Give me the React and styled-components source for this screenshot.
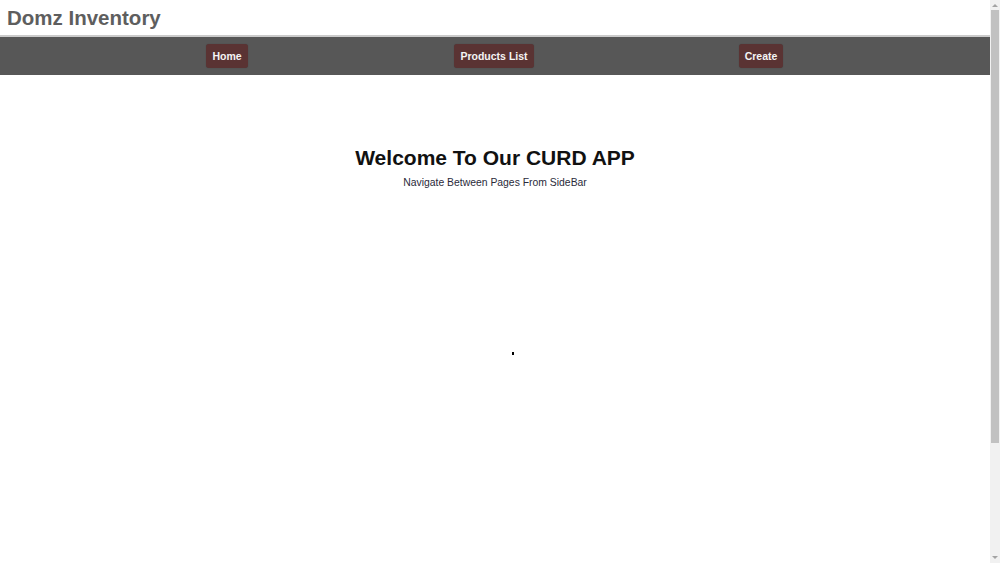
import styled, { createGlobalStyle } from 'styled-components';

const GlobalStyle = createGlobalStyle`
  html, body {
    margin: 0;
    padding: 0;
    background: #fff;
    font-family: "Liberation Sans", Arial, sans-serif;
  }
`;

const Page = styled.div`
  width: 990px;
  min-height: 712px;
  display: flex;
  flex-direction: column;
`;

const Header = styled.header`
  height: 35px;
  border-bottom: 2px solid #cbcbcb;
  display: flex;
  align-items: center;
  padding: 0 7px;
`;

const Brand = styled.h1`
  margin: 0;
  font-size: 20.5px;
  font-weight: 700;
  color: #5e5e5e;
`;

const NavBar = styled.nav`
  background-color: #575757;
  height: 38px;
  display: grid;
  grid-template-columns: repeat(3, 267px);
  justify-content: center;
  align-items: center;
  padding-right: 2px;
`;

const NavItem = styled.div`
  display: flex;
  justify-content: center;
`;

const NavButton = styled.a`
  background-color: #5a3333;
  color: #f4f4f4;
  font-size: 10.5px;
  font-weight: 700;
  padding: 6px 6px;
  border-radius: 3px;
  line-height: 12px;
  cursor: pointer;
  box-shadow: 0 0 1px rgba(0, 0, 0, 0.3);
`;

const Main = styled.main`
  flex: 1;
  display: flex;
  flex-direction: column;
  align-items: center;
  padding-top: 71px;
`;

const Title = styled.h2`
  margin: 0;
  font-size: 21px;
  font-weight: 700;
  color: #111;
`;

const Subtitle = styled.p`
  margin: 7px 0 0;
  font-size: 10.4px;
  color: #2a2a3a;
`;

const Dot = styled.span`
  display: block;
  width: 2px;
  height: 3px;
  background: #000;
  margin: 164px 0 0 35px;
`;

/* fake browser scrollbar, as seen in the screenshot */
const ScrollTrack = styled.div`
  position: fixed;
  top: 0;
  right: 0;
  width: 10px;
  height: 100vh;
  background: #f1f1f1;
  display: flex;
  flex-direction: column;
  align-items: center;
  padding: 4px 0;
  box-sizing: border-box;
  gap: 3px;
`;

const Arrow = styled.span`
  width: 0;
  height: 0;
  border-left: 3px solid transparent;
  border-right: 3px solid transparent;
  ${(props) =>
    props.down
      ? 'border-top: 3px solid #a3a3a3;'
      : 'border-bottom: 3px solid #a3a3a3;'}
`;

const Thumb = styled.div`
  width: 8px;
  height: 433px;
  background: #c1c1c1;
`;

const Spacer = styled.div`
  flex: 1;
`;

const links = ['Home', 'Products List', 'Create'];

const App = () => (
  <Page>
    <GlobalStyle />
    <Header>
      <Brand>Domz Inventory</Brand>
    </Header>
    <NavBar>
      {links.map((link) => (
        <NavItem key={link}>
          <NavButton>{link}</NavButton>
        </NavItem>
      ))}
    </NavBar>
    <Main>
      <Title>Welcome To Our CURD APP</Title>
      <Subtitle>Navigate Between Pages From SideBar</Subtitle>
      <Dot />
    </Main>
    <ScrollTrack>
      <Arrow />
      <Thumb />
      <Spacer />
      <Arrow down />
    </ScrollTrack>
  </Page>
);

export default App;
